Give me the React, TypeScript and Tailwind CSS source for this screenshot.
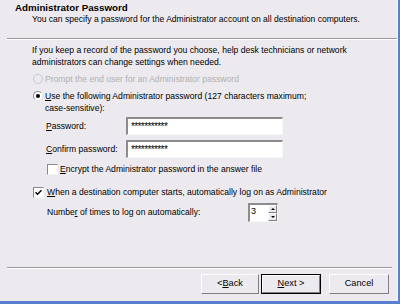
import React from "react";

const font = { fontFamily: '"Liberation Sans", Arial, sans-serif' };

function Radio({ checked, disabled }: { checked?: boolean; disabled?: boolean }) {
  return (
    <span className={"w-[10px] h-[10px] shrink-0 rounded-full border flex items-center justify-center " + (disabled ? "bg-[#eceaee] border-[#c8c8c8]" : "bg-white border-t-[#8a8a8a] border-l-[#8a8a8a] border-r-[#e4e4e4] border-b-[#e4e4e4]")}>
      {checked && <span className="w-[4px] h-[4px] rounded-full bg-black" />}
    </span>
  );
}

function Checkbox({ checked }: { checked?: boolean }) {
  return (
    <span className="w-[11px] h-[11px] shrink-0 bg-white border border-t-[#8a8a8a] border-l-[#8a8a8a] border-r-[#f4f4f4] border-b-[#f4f4f4] flex items-center justify-center">
      {checked && (
        <svg width="7" height="7" viewBox="0 0 7 7">
          <path d="M0.5 3.2 L2.5 5.2 L6.5 1.2" stroke="#000" strokeWidth="1.4" fill="none" />
        </svg>
      )}
    </span>
  );
}

function Field() {
  return (
    <div className="w-[157px] h-[18px] bg-white border-t-2 border-l-2 border-t-[#8c8c8c] border-l-[#8c8c8c] border-r border-b border-r-[#f6f6f6] border-b-[#f6f6f6] flex items-center pl-[3px] text-[10px] leading-none tracking-[-0.6px]">
      ***********
    </div>
  );
}

function Button({ children, def, w }: { children: React.ReactNode; def?: boolean; w: string }) {
  return (
    <div className={(def ? "border border-black " : "") + w + " h-[20px]"}>
      <div className="h-full border border-t-white border-l-white border-r-[#808080] border-b-[#808080] bg-[#eceaee] flex items-center justify-center text-[9.2px]">
        {children}
      </div>
    </div>
  );
}

export default function App() {
  return (
    <div className="w-[400px] h-[304px] bg-[#5a7fd0] pr-[2px] pb-[3px]" style={font}>
      <div className="h-full bg-[#eceaee] border-r border-r-[#f7f1f7] flex flex-col text-[8.6px] text-black">
        <div className="h-[38px] pl-[15px] pt-[2px]">
          <div className="font-bold text-[9.75px] leading-[12px]">Administrator Password</div>
          <div className="pl-[17px] leading-[11px] text-[8.55px]">You can specify a password for the Administrator account on all destination computers.</div>
        </div>
        <div className="ml-[7px] h-[2px] border-t border-t-[#9a9a9e] border-b border-b-white" />

        <div className="pl-[32px] flex flex-col">
          <div className="mt-[4px] leading-[12px]">
            If you keep a record of the password you choose, help desk technicians or network
            <br />
            administrators can change settings when needed.
          </div>

          <div className="mt-[5px] h-[12px] flex items-center gap-[2px] pl-[1px]">
            <Radio disabled />
            <span className="text-[#b0b0b0]">Prompt the end user for an Administrator password</span>
          </div>

          <div className="mt-[5px] flex gap-[2px] pl-[1px]">
            <div className="h-[12px] flex items-center"><Radio checked /></div>
            <div className="leading-[12px]">
              <u>U</u>se the following Administrator password (127 characters maximum;
              <br />
              case-sensitive):
            </div>
          </div>

          <div className="mt-[3px] pl-[14px] flex items-center">
            <span className="w-[80px]"><u>P</u>assword:</span>
            <Field />
          </div>
          <div className="mt-[5px] pl-[14px] flex items-center">
            <span className="w-[80px]"><u>C</u>onfirm password:</span>
            <Field />
          </div>

          <div className="mt-[5px] h-[12px] pl-[15px] flex items-center gap-[2px]">
            <Checkbox />
            <span><u>E</u>ncrypt the Administrator password in the answer file</span>
          </div>

          <div className="mt-[11px] h-[12px] pl-[1px] flex items-center gap-[3px]">
            <Checkbox checked />
            <span><u>W</u>hen a destination computer starts, automatically log on as Administrator</span>
          </div>

          <div className="mt-[5px] pl-[15px] flex items-center">
            <span className="w-[201px]">Numbe<u>r</u> of times to log on automatically:</span>
            <div className="h-[19px] flex bg-white border-t-2 border-l-2 border-t-[#8c8c8c] border-l-[#8c8c8c] border-r border-b border-r-[#f6f6f6] border-b-[#f6f6f6]">
              <div className="w-[18px] pl-[1px] leading-[13px] text-[9px]">3</div>
              <div className="w-[9px] flex flex-col">
                <div className="flex-1 bg-[#eceaee] border border-t-white border-l-white border-r-[#808080] border-b-[#808080] flex items-center justify-center">
                  <span className="w-0 h-0 border-l-[2px] border-r-[2px] border-b-[2px] border-l-transparent border-r-transparent border-b-black" />
                </div>
                <div className="flex-1 bg-[#eceaee] border border-t-white border-l-white border-r-[#808080] border-b-[#808080] flex items-center justify-center">
                  <span className="w-0 h-0 border-l-[2px] border-r-[2px] border-t-[2px] border-l-transparent border-r-transparent border-t-black" />
                </div>
              </div>
            </div>
          </div>
        </div>

        <div className="mt-auto">
          <div className="ml-[7px] mr-[5px] h-[2px] border-t border-t-[#9a9a9e] border-b border-b-white" />
          <div className="pt-[5px] pb-[7px] pr-[8px] flex justify-end">
            <Button w="w-[58px]">&lt; <u>B</u>ack</Button>
            <div className="w-[2px]" />
            <Button def w="w-[60px]"><u>N</u>ext &gt;</Button>
            <div className="w-[8px]" />
            <Button w="w-[60px]">Cancel</Button>
          </div>
        </div>
      </div>
    </div>
  );
}
